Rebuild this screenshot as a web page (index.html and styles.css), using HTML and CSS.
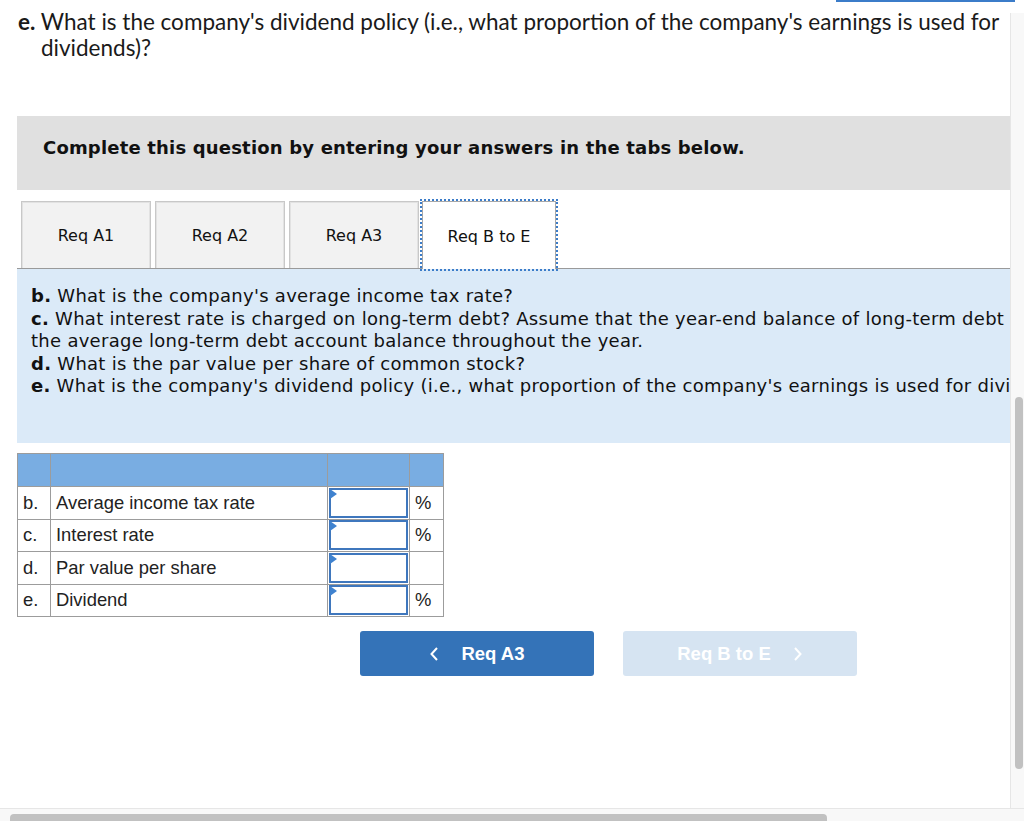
FILE: index.html
```html
<!DOCTYPE html>
<html>
<head>
<meta charset="utf-8">
<link rel="stylesheet" href="styles.css">
</head>
<body>
<div class="topline"></div>
<div class="frame">
  <div class="main">
    <div class="viewport">
      <div class="content">
        <p class="qhead"><b>e.</b> What is the company's dividend policy (i.e., what proportion of the company's earnings is used for dividends)?</p>
        <div class="qbox">
          <div class="instr">Complete this question by entering your answers in the tabs below.</div>
          <div class="tabs">
            <div class="tab">Req A1</div>
            <div class="tab">Req A2</div>
            <div class="tab">Req A3</div>
            <div class="tab active">Req B to E</div>
          </div>
          <div class="panel">
            <div class="pline"><b>b.</b> What is the company's average income tax rate?</div>
            <div class="pline"><b>c.</b> What interest rate is charged on long-term debt? Assume that the year-end balance of long-term debt is representative of<br>the average long-term debt account balance throughout the year.</div>
            <div class="pline"><b>d.</b> What is the par value per share of common stock?</div>
            <div class="pline"><b>e.</b> What is the company's dividend policy (i.e., what proportion of the company's earnings is used for dividends)?</div>
          </div>
          <table class="grid">
            <colgroup>
              <col class="c1"><col class="c2"><col class="c3"><col class="c4">
            </colgroup>
            <tr class="head"><td></td><td></td><td></td><td></td></tr>
            <tr><td>b.</td><td>Average income tax rate</td><td class="icell"><div class="inp"></div></td><td>%</td></tr>
            <tr><td>c.</td><td>Interest rate</td><td class="icell"><div class="inp"></div></td><td>%</td></tr>
            <tr><td>d.</td><td>Par value per share</td><td class="icell"><div class="inp"></div></td><td></td></tr>
            <tr><td>e.</td><td>Dividend</td><td class="icell"><div class="inp"></div></td><td>%</td></tr>
          </table>
          <div class="nav">
            <div class="btn prev">
              <svg class="chev" width="10" height="16" viewBox="0 0 10 16"><path d="M8 2 L2.5 8 L8 14" fill="none" stroke="#fff" stroke-width="2"/></svg>
              <span>Req A3</span>
            </div>
            <div class="btn next">
              <span>Req B to E</span>
              <svg class="chev" width="10" height="16" viewBox="0 0 10 16"><path d="M2 2 L7.5 8 L2 14" fill="none" stroke="#fff" stroke-width="2"/></svg>
            </div>
          </div>
        </div>
      </div>
    </div>
    <div class="vtrack"><div class="vthumb"></div></div>
  </div>
  <div class="htrack"><div class="hthumb"></div></div>
</div>
</body>
</html>
```

FILE: styles.css
```css
* { box-sizing: border-box; }
html, body { margin: 0; padding: 0; background: #fff; }
body {
  width: 1024px;
  height: 821px;
  overflow: hidden;
  position: relative;
  font-family: "DejaVu Sans", Verdana, sans-serif;
  color: #111;
}
.topline {
  position: absolute;
  top: 0;
  left: 836px;
  width: 179px;
  height: 2px;
  background: #3b7cc9;
  z-index: 3;
}
.frame { display: flex; flex-direction: column; height: 821px; }
.main { display: flex; height: 809px; }
.viewport {
  width: 1010px;
  height: 809px;
  overflow: hidden;
  border-bottom: 1px solid #e6e6e6;
  background: #fff;
}
.content { width: 1260px; }
.vtrack {
  width: 14px;
  margin-top: 13px;
  background: #f8f8f8;
  border-left: 1px solid #e6e6e6;
  border-bottom: 1px solid #e6e6e6;
  padding: 384px 0 0 4px;
}
.vthumb { width: 8px; height: 372px; border-radius: 4px; background: #c1c1c1; }
.htrack { height: 12px; background: #f8f8f8; padding: 5px 0 0 10px; overflow: hidden; }
.hthumb { width: 817px; height: 12px; border-radius: 4px; background: #c1c1c1; }

.qhead {
  margin: 0 0 0 18px;
  padding: 9px 0 0 23px;
  text-indent: -23px;
  width: 990px;
  font-family: Lato, "Open Sans", sans-serif;
  font-size: 22.5px;
  line-height: 26px;
  color: #1a1a1a;
}
.qhead b { font-weight: 700; }

.qbox { margin: 55px 0 0 17px; width: 1243px; }
.instr {
  height: 74px;
  background: #e0e0e0;
  padding: 21px 0 0 26px;
  font-weight: bold;
  font-size: 18px;
  letter-spacing: 0.18px;
  color: #111;
}
.tabs {
  display: flex;
  gap: 4px;
  height: 67px;
  margin-top: 11px;
  padding-left: 4px;
  position: relative;
  z-index: 1;
}
.tab {
  width: 130px;
  height: 67px;
  background: #f2f2f2;
  border: 1px solid #c8c8c8;
  border-bottom: none;
  box-shadow: inset 1px 1px 0 #e2e2e2, inset -1px 0 0 #e2e2e2;
  display: flex;
  align-items: center;
  justify-content: center;
  padding-top: 1px;
  font-size: 16px;
  color: #111;
}
.tab.active {
  width: 134px;
  margin-left: -1px;
  height: 68px;
  background: #fff;
  border: 1px solid #a8a8a8;
  border-bottom: none;
  box-shadow: none;
  outline: 2px dotted #3b7cc9;
  outline-offset: 0px;
}
.panel {
  background: #dbeaf8;
  border-top: 1px solid #9a9a9a;
  height: 175px;
  padding: 16px 0 0 14px;
  font-size: 18px;
  letter-spacing: 0.28px;
  line-height: 22.5px;
  color: #111;
  white-space: nowrap;
}
.grid {
  margin-top: 10px;
  border-collapse: collapse;
  table-layout: fixed;
  width: 426px;
  font-family: "Liberation Sans", Arial, sans-serif;
  font-size: 18.4px;
  color: #222;
}
.c1 { width: 33px; }
.c2 { width: 277px; }
.c3 { width: 82px; }
.c4 { width: 34px; }
.grid td {
  border: 1px solid #9c9c9c;
  height: 32.5px;
  padding: 0 5px;
  white-space: nowrap;
}
.grid tr.head td { background: #79ade2; height: 33px; }
.grid td.icell { padding: 0 1px; }
.inp {
  position: relative;
  height: 30px;
  border: 2px solid #3f77bd;
  background: #fff;
}
.inp::before {
  content: "";
  position: absolute;
  left: -1px;
  top: -1px;
  border-top: 5px solid transparent;
  border-bottom: 5px solid transparent;
  border-left: 7px solid #3f82cf;
}
.nav { display: flex; gap: 29px; margin: 14px 0 0 343px; }
.btn {
  width: 234px;
  height: 45px;
  border-radius: 3px;
  display: flex;
  align-items: center;
  justify-content: center;
  gap: 22px;
  font-family: "Liberation Sans", Arial, sans-serif;
  font-weight: bold;
  font-size: 18.5px;
  color: #fff;
}
.btn.prev { background: #3473b8; }
.btn.next { background: #d6e4f2; }
.chev { display: block; }
```
